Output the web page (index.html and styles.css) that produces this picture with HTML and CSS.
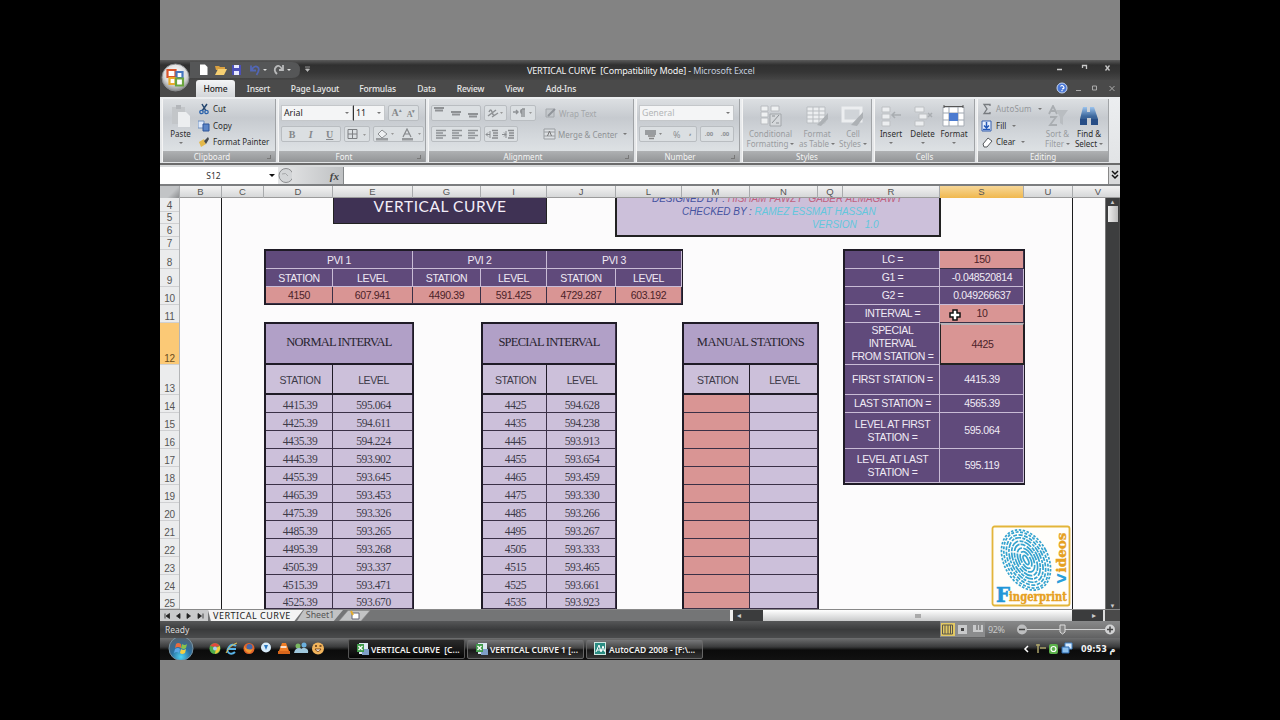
FILE: index.html
```html
<!DOCTYPE html>
<html lang="en">
<head>
<meta charset="utf-8">
<title>VERTICAL CURVE - Microsoft Excel</title>
<link rel="stylesheet" href="styles.css">
</head>
<body>
<svg class="defs" width="0" height="0">
  <defs>
    <linearGradient id="gBlue" x1="0" y1="0" x2="0" y2="1"><stop offset="0" stop-color="#9cc4ee"/><stop offset=".5" stop-color="#3f6a9f"/><stop offset="1" stop-color="#1f4478"/></linearGradient>
    <radialGradient id="gOrb" cx=".5" cy=".35" r=".7"><stop offset="0" stop-color="#fff"/><stop offset=".6" stop-color="#d9dadb"/><stop offset="1" stop-color="#77797b"/></radialGradient>
    <radialGradient id="gStart" cx=".5" cy=".85" r=".8"><stop offset="0" stop-color="#4fd4f5"/><stop offset=".5" stop-color="#2a6fa0"/><stop offset="1" stop-color="#56636f"/></radialGradient>
    <g id="lines"><path d="M1 1.5h10M1 4h7M1 6.5h10M1 9h7" stroke="#8f9396" stroke-width="1.3" fill="none"/></g>
    <g id="xls"><path d="M3 1h9v11H3z" fill="#dce8f2"/><path d="M6 7h7v6H6z" fill="#7fa0c8"/><path d="M1 2h7v8H1z" fill="#3f9a4a"/><path d="M2.5 4l4 4M6.500 4l-4 4" stroke="#fff" stroke-width="1.3"/></g>
  </defs>
</svg>
<div class="frame">
<main class="window">
  <header class="titlebar">
    <svg class="qat" width="160" height="20" viewBox="0 0 160 20">
      <path d="M30 2h102q8 0 8 8t-8 8H30z" fill="#555657"/>
      <path d="M40 4.500h5l2.500 2.500v8H40z" fill="#fff"/>
      <path d="M55 6h4l1 1h5v3h-9z" fill="#d9a040"/><path d="M55 15l3-6h9l-3 6z" fill="#f5cf72"/>
      <path d="M72 5h9v10h-9z" fill="#4c50b8"/><path d="M74 5h5v3h-5zM74 11h5v4h-5z" fill="#e8eaff"/>
      <path d="M91 5.500v5h5M91.500 10q3-5 6-3t-1 8" stroke="#5266b4" stroke-width="1.800" fill="none"/>
      <path d="M123 5v5h-4M122 9q-3-5-6-2t1 7" stroke="#b9babb" stroke-width="1.800" fill="none"/>
      <path d="M103 9h4l-2 2zM127 9h4l-2 2z" fill="#ddd"/><path d="M145 7h5M145.500 9h4l-2 2.500z" stroke="#bbb" stroke-width=".7" fill="#bbb"/>
    </svg>
    <div class="title">VERTICAL CURVE&nbsp; [Compatibility Mode] - <span>Microsoft Excel</span></div>
    <svg class="winbtns" width="70" height="20" viewBox="0 0 70 20"><g stroke="#c8c8c8" fill="none"><path d="M8 9.500h5" stroke-width="1.500"/><path d="M33.500 8V5.500h4V9" stroke-width="1.300"/><path d="M56.500 5.500l4 5m0-5l-4 5" stroke-width="1.300"/></g></svg>
  </header>
  <nav class="tabs">
    <span class="tab t1 active">Home</span><span class="tab t2">Insert</span><span class="tab t3">Page Layout</span><span class="tab t4">Formulas</span><span class="tab t5">Data</span><span class="tab t6">Review</span><span class="tab t7">View</span><span class="tab t8">Add-Ins</span>
    <svg class="docbtns" width="62" height="17" viewBox="0 0 62 17"><circle cx="6" cy="8" r="5" fill="#4a78d8" stroke="#c6d6f2"/><path d="M4.500 6.500q1.500-2 3 0T6 9M6 10v1.300" stroke="#fff" stroke-width="1.200" fill="none"/><g stroke="#aaa" fill="none"><path d="M20 10.500h5M36.500 6h4v4h-4zM53.500 6l5 5m0-5l-5 5"/></g></svg>
  </nav>
  <svg class="orb" width="29" height="29" viewBox="0 0 29 29"><circle cx="14.500" cy="14.500" r="13.500" fill="url(#gOrb)" stroke="#8b8d8f"/><g fill="#fff" stroke-width="2.200"><path d="M6.500 7h8v7h-8z" stroke="#d9542b"/><path d="M15.500 9h6v6h-6z" stroke="#4476c0"/><path d="M8.500 15h6v6h-6z" stroke="#e8ab2c"/><path d="M15 15.500h7v7h-7z" stroke="#6aa53f"/></g></svg>

  <section class="ribbon">
    <div class="group g-clip">
      <div class="body">
        <div class="big paste"><svg width="22" height="24" viewBox="0 0 22 24"><path d="M2 2h13v17H2z" fill="#c3c6c9"/><path d="M6 0h5v4H6z" fill="#b3b6ba"/><path d="M8 7h8l4 4v11H8z" fill="#eceef0"/></svg><b>Paste</b><i class="dd"></i></div>
        <div class="stack">
          <div><svg width="12" height="12" viewBox="0 0 12 12"><path d="M4 1l4 7M9 1L4 8" stroke="#24466f" stroke-width="1.500"/><circle cx="3.500" cy="9" r="1.700" fill="none" stroke="#2d64ac" stroke-width="1.300"/><circle cx="8.500" cy="9" r="1.700" fill="none" stroke="#2d64ac" stroke-width="1.300"/></svg><b>Cut</b></div>
          <div><svg width="12" height="12" viewBox="0 0 12 12"><path d="M0 1h6v7H0z" fill="#dfeafc" stroke="#6f8fbd"/><path d="M5 4h6v7H5z" fill="#5c85c6" stroke="#2d5499"/></svg><b>Copy</b></div>
          <div><svg width="12" height="12" viewBox="0 0 12 12"><path d="M1 6l5-3 2 5-5 3z" fill="#e3b84a"/><path d="M6 5l4-4 1 2-3 5z" fill="#45494d"/></svg><b class="fp">Format Painter</b></div>
        </div>
      </div>
      <div class="cap">Clipboard<i></i></div>
    </div>
    <div class="group g-font">
      <div class="body col">
        <div class="line"><span class="box w72">Arial<i class="dd"></i></span><span class="box w32">11<i class="dd"></i></span><span class="btn w31 gap3"><em class="serif">A<sup>▴</sup></em><em class="serif sm">A<sup>▾</sup></em></span></div>
        <div class="line"><span class="btn w60"><em class="serif">B</em><em class="serif it">I</em><em class="serif un">U</em></span><span class="btn w26 gap3"><svg width="22" height="11" viewBox="0 0 22 11"><path d="M2 .5h9v9H2zM6.500 0v10M2 5h9" stroke="#7c7f82" fill="none"/><path d="M17 5h3l-1.500 2z" fill="#999"/></svg></span><span class="btn w51 gap3"><svg width="48" height="13" viewBox="0 0 48 13"><path d="M3 6l4-4 5 4-5 4z" fill="#eef0f2" stroke="#8c8f92"/><path d="M1 10h12v2.500H1z" fill="#9a9da0"/><path d="M28 9l4-8 4 8M29.500 6h5" fill="none" stroke="#85888b" stroke-width="1.200"/><path d="M27 10h11v2.500H27z" fill="#96999c"/><path d="M16 5h3l-1.500 2zM43 5h3l-1.500 2z" fill="#999"/></svg></span></div>
      </div>
      <div class="cap">Font<i></i></div>
    </div>
    <div class="group g-align">
      <div class="body col">
        <div class="line"><span class="btn w50"><svg width="48" height="14" viewBox="0 0 48 14"><path d="M2 2h10M3 4.500h8M19 6h10M20 8.500h8M36 8h10M37 10.500h8" stroke="#8f9295" stroke-width="1.800"/></svg></span><span class="btn w23 gap3"><svg width="20" height="12" viewBox="0 0 20 12"><path d="M2 9l8-6M3 5q2-4 3 0t3 3M6 10l6-4" stroke="#8f9295" stroke-width="1.500" fill="none"/><path d="M14 5h3l-1.500 2z" fill="#999"/></svg></span><span class="btn w26 gap3"><svg width="24" height="12" viewBox="0 0 24 12"><path d="M2 5h5M5 3l2 2-2 2M11 2v8M13 2v8M11 2h3" stroke="#8f9295" stroke-width="1.400" fill="none"/><path d="M9 4q0-2 2-2v5q-2 0-2-3z" fill="#8f9295"/><path d="M18 5h3l-1.500 2z" fill="#999"/></svg></span><span class="txt"><svg width="13" height="12" viewBox="0 0 13 12"><path d="M2 2h8v8H2z" fill="#c4c8cc" stroke="#a4a8ac"/><path d="M4 9l7-7" stroke="#90949a" stroke-width="2"/></svg>Wrap Text</span></div>
        <div class="line"><span class="btn w50"><svg width="11" height="11"><use href="#lines"/></svg><svg width="11" height="11"><use href="#lines"/></svg><svg width="11" height="11"><use href="#lines"/></svg></span><span class="btn w34 gap3"><svg width="32" height="11" viewBox="0 0 32 11"><path d="M7 1.500h6M8 4h5M8 6.500h5M7 9h6M23 1.500h6M24 4h5M24 6.500h5M23 9h6" stroke="#8a8d90" stroke-width="1.300"/><path d="M5 2v7M1 5.500h4M3 3.500l-2 2 2 2M21 2v7M17 5.500h4M19 3.500l2 2-2 2" stroke="#8a8d90" fill="none"/></svg></span><span class="txt mc"><svg width="13" height="12" viewBox="0 0 13 12"><path d="M1 1h11v10H1zM1 4h11M1 8h11" fill="#dde0e3" stroke="#999da1"/><path d="M4.500 8L6.500 3l2 5" stroke="#777" fill="none"/></svg>Merge &amp; Center<i class="dd"></i></span></div>
      </div>
      <div class="cap">Alignment<i></i></div>
    </div>
    <div class="group g-num">
      <div class="body col">
        <div class="line"><span class="box w95 dis">General<i class="dd"></i></span></div>
        <div class="line"><span class="btn w58"><svg width="20" height="12" viewBox="0 0 20 12"><path d="M1 2h11v5H1z" fill="#999c9f"/><path d="M4 8h7M5 10.500h5" stroke="#888" stroke-width="1.500"/><path d="M15 5h3l-1.500 2z" fill="#888"/></svg><em>%</em><em class="comma">,</em></span><span class="btn w34 gap3"><em class="dec">.00</em><em class="dec">.00</em></span></div>
      </div>
      <div class="cap">Number<i></i></div>
    </div>
    <div class="group g-styles">
      <div class="body">
        <div class="big w56 dis"><svg width="26" height="24" viewBox="0 0 26 24"><path d="M3 1h7v5H3zM3 7h7v5H3zM3 13h7v6H3zM13 1h8v5h-8z" fill="#eff1f2" stroke="#b9bcc0"/><path d="M12 9h11v12H12z" fill="#d5d8db" stroke="#a2a6aa"/><path d="M14 18l7-8M14 11h3M18 18h3" stroke="#8d9195"/></svg><b>Conditional</b><b>Formatting<i class="dd"></i></b></div>
        <div class="big w38 dis"><svg width="24" height="24" viewBox="0 0 24 24"><path d="M2 2h18v16H2zM2 6h18M2 10h18M2 14h18M8 2v16M14 2v16" fill="#eceef0" stroke="#b9bdc1"/><path d="M12 20L23 8v6l-7 7z" fill="#adb1b5"/></svg><b>Format</b><b>as Table<i class="dd"></i></b></div>
        <div class="big w34 dis"><svg width="24" height="24" viewBox="0 0 24 24"><path d="M2 3h18v13H2z" fill="#d0d4d8" stroke="#eceef0" stroke-width="3"/><path d="M10 20L22 7v6l-6 8z" fill="#adb1b5"/></svg><b>Cell</b><b>Styles<i class="dd"></i></b></div>
      </div>
      <div class="cap">Styles</div>
    </div>
    <div class="group g-cells">
      <div class="body">
        <div class="big w33"><svg width="24" height="24" viewBox="0 0 24 24"><path d="M3 2h8v5H3zM3 9h8v5H3zM3 16h8v5H3z" fill="#eceef0" stroke="#bdc0c3"/><path d="M22 10h-9M16 7l-3 3 3 3" stroke="#a9adb1" fill="none" stroke-width="1.500"/></svg><b>Insert</b><i class="dd"></i></div>
        <div class="big w31"><svg width="24" height="24" viewBox="0 0 24 24"><path d="M4 2h9v5H4zM8 9h8v5H8zM4 16h9v5H4z" fill="#eceef0" stroke="#bdc0c3"/><path d="M17 8l4 4m0-4l-4 4" stroke="#a9adb1" stroke-width="1.500"/></svg><b>Delete</b><i class="dd"></i></div>
        <div class="big w33"><svg width="24" height="24" viewBox="0 0 24 24"><path d="M1 2h21v19H1z" fill="#fff" stroke="#a7adb5"/><path d="M1 8h21M1 15h21M7 2v19M16 2v19" stroke="#9da5af"/><path d="M7 8h9v8H7z" fill="#4c7bd0"/><path d="M2 0v3M21 0v3M2 1.500h19" stroke="#555"/></svg><b>Format</b><i class="dd"></i></div>
      </div>
      <div class="cap">Cells</div>
    </div>
    <div class="group g-edit">
      <div class="body">
        <div class="stack">
          <div class="dis"><svg width="12" height="12" viewBox="0 0 12 12"><path d="M9 3V1.500H3L6 6l-3 4.500h6V9" stroke="#777b7f" stroke-width="1.300" fill="none"/></svg><b class="as">AutoSum</b><i class="dd"></i></div>
          <div><svg width="12" height="12" viewBox="0 0 12 12"><path d="M1 1h9v10H1z" fill="#e8f0fd" stroke="#355fae"/><path d="M5.500 2v5M3 5.500L5.500 8 8 5.500M2 9.500h7" stroke="#2458b8" stroke-width="1.500" fill="none"/></svg><b>Fill</b><i class="dd"></i></div>
          <div><svg width="12" height="12" viewBox="0 0 12 12"><path d="M2 8l5-6 4 3-5 6H3z" fill="#fff" stroke="#54585c"/></svg><b>Clear</b><i class="dd"></i></div>
        </div>
        <div class="big w31 dis"><svg width="24" height="24" viewBox="0 0 24 24"><path d="M3 9l4-8 4 8M5 6h4M4 12h6l-6 8h7" stroke="#a9adb1" stroke-width="1.800" fill="none"/><path d="M10 5h12l-5 7v8l-3-2v-6z" fill="#b9bdc1"/></svg><b>Sort &amp;</b><b>Filter<i class="dd"></i></b></div>
        <div class="big w32"><svg width="24" height="24" viewBox="0 0 24 24"><path d="M6 2h4v5h3V2h4l4 12v6h-7v-7h-4v7H3v-6z" fill="url(#gBlue)"/><path d="M3 14h7v6H3zM14 14h7v6h-7z" fill="#274d86"/></svg><b>Find &amp;</b><b>Select<i class="dd"></i></b></div>
      </div>
      <div class="cap">Editing</div>
    </div>
  </section>

  <section class="formula">
    <span class="name">S12</span><i class="dd big-dd"></i>
    <span class="fx"><svg width="14" height="15" viewBox="0 0 14 15"><circle cx="8" cy="7.500" r="7" fill="#d3d5d7" stroke="#8b8d8f"/><path d="M4 6q4-2 6 2" stroke="#a6a8aa" fill="none"/></svg><b>fx</b></span>
    <span class="input"></span><span class="expand"><svg width="12" height="16" viewBox="0 0 12 16"><path d="M3 4l3 3 3-3M3 8l3 3 3-3" stroke="#111" stroke-width="1.500" fill="none"/></svg></span>
  </section>

  <section class="grid">
    <div class="colhead"><span class="corner"></span><span>B</span><span>C</span><span>D</span><span>E</span><span>G</span><span>I</span><span>J</span><span>L</span><span>M</span><span>N</span><span>Q</span><span>R</span><span class="on">S</span><span>U</span><span class="v">V</span></div>
    <div class="rowhead"><span>4</span><span>5</span><span>6</span><span>7</span><span>8</span><span>9</span><span>10</span><span>11</span><span class="on">12</span><span>13</span><span>14</span><span>15</span><span>16</span><span>17</span><span>18</span><span>19</span><span>20</span><span>21</span><span>22</span><span>23</span><span>24</span><span class="last">25</span></div>
    <div class="sheet">
      <div class="margin"></div>
      <div class="heading">VERTICAL CURVE</div>
      <div class="credits"><p class="c1"><span class="navy">DESIGNED BY :</span> HISHAM FAWZY&nbsp; GABER ALMAGAWY</p><p class="c2"><span class="navy">CHECKED BY :</span> RAMEZ ESSMAT HASSAN</p><p class="c3">VERSION&nbsp;&nbsp; 1.0</p></div>
      <div class="tbl pvi">
        <span class="h two">PVI 1</span><span class="h two">PVI 2</span><span class="h two">PVI 3</span>
        <span class="h">STATION</span><span class="h">LEVEL</span><span class="h">STATION</span><span class="h">LEVEL</span><span class="h">STATION</span><span class="h">LEVEL</span>
        <span class="r">4150</span><span class="r">607.941</span><span class="r">4490.39</span><span class="r">591.425</span><span class="r">4729.287</span><span class="r">603.192</span>
      </div>
      <div class="tbl data normal">
        <span class="cap2">NORMAL INTERVAL</span><span class="h">STATION</span><span class="h">LEVEL</span>
        <span>4415.39</span><span>595.064</span><span>4425.39</span><span>594.611</span><span>4435.39</span><span>594.224</span><span>4445.39</span><span>593.902</span><span>4455.39</span><span>593.645</span><span>4465.39</span><span>593.453</span><span>4475.39</span><span>593.326</span><span>4485.39</span><span>593.265</span><span>4495.39</span><span>593.268</span><span>4505.39</span><span>593.337</span><span>4515.39</span><span>593.471</span><span>4525.39</span><span>593.670</span>
      </div>
      <div class="tbl data special">
        <span class="cap2">SPECIAL INTERVAL</span><span class="h">STATION</span><span class="h">LEVEL</span>
        <span>4425</span><span>594.628</span><span>4435</span><span>594.238</span><span>4445</span><span>593.913</span><span>4455</span><span>593.654</span><span>4465</span><span>593.459</span><span>4475</span><span>593.330</span><span>4485</span><span>593.266</span><span>4495</span><span>593.267</span><span>4505</span><span>593.333</span><span>4515</span><span>593.465</span><span>4525</span><span>593.661</span><span>4535</span><span>593.923</span>
      </div>
      <div class="tbl data manual">
        <span class="cap2">MANUAL STATIONS</span><span class="h">STATION</span><span class="h">LEVEL</span>
        <span class="r"></span><span></span><span class="r"></span><span></span><span class="r"></span><span></span><span class="r"></span><span></span><span class="r"></span><span></span><span class="r"></span><span></span><span class="r"></span><span></span><span class="r"></span><span></span><span class="r"></span><span></span><span class="r"></span><span></span><span class="r"></span><span></span><span class="r"></span><span></span>
      </div>
      <div class="tbl params">
        <span class="h">LC =</span><span class="r">150</span>
        <span class="h">G1 =</span><span class="h n">-0.048520814</span>
        <span class="h">G2 =</span><span class="h n">0.049266637</span>
        <span class="h">INTERVAL =</span><span class="r">10</span>
        <span class="h">SPECIAL<br>INTERVAL<br>FROM STATION =</span><span class="r sel">4425</span>
        <span class="h">FIRST STATION =</span><span class="h n">4415.39</span>
        <span class="h">LAST STATION =</span><span class="h n">4565.39</span>
        <span class="h s2">LEVEL AT FIRST<br>STATION =</span><span class="h n s2">595.064</span>
        <span class="h s2">LEVEL AT LAST<br>STATION =</span><span class="h n s2">595.119</span>
      </div>
      <svg class="logo" width="80" height="83" viewBox="0 0 80 83">
        <rect x="1.500" y="1.500" width="77" height="79" rx="2" fill="#fffefb" stroke="#e3b53a" stroke-width="1.800"/>
        <g transform="rotate(-28 35 35)" fill="none" stroke="#35a3cf" stroke-width="1.700">
          <ellipse cx="35" cy="35" rx="2" ry="5"/><ellipse cx="35" cy="35" rx="4.500" ry="9" stroke-dasharray="9 1.500"/><ellipse cx="35" cy="35" rx="7" ry="13" stroke-dasharray="7 1.500 12 1"/><ellipse cx="35" cy="35" rx="9.500" ry="17" stroke-dasharray="5 1.500 9 1"/><ellipse cx="35" cy="35" rx="12" ry="20.500" stroke-dasharray="8 1.300 4 1"/><ellipse cx="35" cy="35" rx="14.500" ry="24" stroke-dasharray="6 1.500 3 1"/><ellipse cx="35" cy="35" rx="17" ry="27" stroke-dasharray="4 1.500"/><ellipse cx="35" cy="35" rx="19.500" ry="30" stroke-dasharray="3 1.500"/><ellipse cx="35" cy="35" rx="22" ry="32" stroke-dasharray="2.500 1.500"/>
        </g>
        <text x="5" y="77" class="lf" textLength="14" lengthAdjust="spacingAndGlyphs">F</text>
        <text x="18" y="76" class="lt" textLength="58" lengthAdjust="spacingAndGlyphs">ingerprint</text>
        <g transform="translate(74.500 58.500) rotate(-90)"><text x="0" y="0" class="lv" textLength="10" lengthAdjust="spacingAndGlyphs">V</text><text x="11" y="0" class="lt" textLength="40" lengthAdjust="spacingAndGlyphs">ideos</text></g>
      </svg>
      <svg class="cursor" width="12" height="12" viewBox="0 0 12 12"><path d="M4 1h4v3h3v4H8v3H4V8H1V4h3z" fill="#fff" stroke="#111" stroke-width="1.500"/></svg>
    </div>
    <div class="vscroll"><i class="up">▲</i><i class="thumb"></i><i class="down">▼</i></div>
  </section>

  <section class="sheettabs">
    <svg class="nav" width="48" height="12" viewBox="0 0 48 12"><path d="M0 0h48v12H0z" fill="#c9cacb"/><path d="M5 3.500v5M9.500 3.500v5L6 6zM20 3.500v5L16.500 6zM27 3.500v5L30.500 6zM38 3.500v5L41.500 6zM43 3.500v5" fill="#222" stroke="#222" stroke-width=".8"/></svg>
    <span class="st cur">VERTICAL CURVE</span><span class="st s1">Sheet1</span>
    <svg class="newtab" width="32" height="12" viewBox="0 0 32 12"><path d="M0 11L9 .5h22L22 11z" fill="#c2c3c4" stroke="#8a8a8a" stroke-width=".6"/><path d="M13 3h7v6h-7z" fill="#fff" stroke="#667"/><path d="M12 1l2 4" stroke="#e6ad2c" stroke-width="2"/></svg>
    <span class="fill"></span><span class="split"></span><span class="hl">◂</span><span class="htrack"><i></i></span><span class="hr">▸</span><span class="end"></span>
  </section>

  <footer class="status"><span class="ready">Ready</span>
    <svg width="180" height="17" viewBox="0 0 180 17"><path d="M-1 1h46v15H-1z" fill="#8b8c8d"/><path d="M1 2h14v13H1z" fill="#e3c964"/><path d="M2.500 4h10v9h-10zM5 4v9M8 4v9M10.500 4v9" stroke="#5b574b" fill="none"/><path d="M18 4h9v9h-9zM33 4h10v7H33z" fill="#c9cacb"/><path d="M21 7h3v3h-3z" fill="#444"/><path d="M37 4v5M40 4v5" stroke="#555"/><path d="M84 8.500h88" stroke="#d0d1d2"/><circle cx="82" cy="8.500" r="5" fill="#bdbebf"/><path d="M79 8.500h6" stroke="#444" stroke-width="1.500"/><circle cx="170" cy="8.500" r="5" fill="#d2d3d4"/><path d="M167 8.500h6M170 5.500v6" stroke="#444" stroke-width="1.500"/><path d="M120 4h5v7l-2.500 2-2.500-2z" fill="#888" stroke="#ddd"/><text x="48" y="12" class="zoomtxt" textLength="17">92%</text></svg>
  </footer>

  <footer class="taskbar">
    <svg class="quick" width="188" height="22" viewBox="0 0 188 22">
      <circle cx="21" cy="10.500" r="12" fill="url(#gStart)" stroke="#7794a5"/><path d="M16 6q2-2 5 0v4q-3-2-6 0z" fill="#e96b3c"/><path d="M22 6q3 2 5 0l-1 4q-2 2-5 0z" fill="#8ac34c"/><path d="M15 11q3-2 5 0l-1 4q-2-2-5 0z" fill="#5aa7e8"/><path d="M21 11q2 2 5 0l-1 4q-3 2-5 0z" fill="#f5cf42"/>
      <circle cx="55" cy="10.500" r="5.500" fill="#4fae4b"/><path d="M50 8q5-6 10 0l-5 1z" fill="#e2483d"/><path d="M60 8q1 6-5 8l1-6z" fill="#f3cd3b"/><circle cx="55" cy="10.500" r="2" fill="#a9ccf5"/>
      <path d="M76 8q-4-3-7 1t0 6q3 2 6-1M68 11h8" stroke="#58b4e8" stroke-width="2" fill="none"/><path d="M66 15q4-8 11-10" stroke="#e8c34b" fill="none"/>
      <circle cx="89" cy="10.500" r="5.500" fill="#e2642a"/><circle cx="89.500" cy="9" r="3" fill="#4567a8"/><path d="M84 8q3 5 9 3l-3 4q-5 0-6-7z" fill="#f09b34"/>
      <circle cx="106" cy="9.500" r="5" fill="#d9ecfa"/><path d="M104 7h4l-2 5z" fill="#2a78c2"/>
      <path d="M122 5h4l3 8h-10z" fill="#ef7d25"/><path d="M120.500 9h6" stroke="#fff" stroke-width="1.500"/><path d="M118 13h12v3h-12z" fill="#d9661b"/>
      <circle cx="138" cy="8" r="2.500" fill="#7ab861"/><circle cx="144" cy="7" r="2.500" fill="#6bb0df"/><path d="M134 15q1-5 5-5t4 5zM140 15q1-6 5-5t3 5z" fill="#9fc7dc"/>
      <circle cx="158" cy="10.500" r="6" fill="#f2b45c"/><path d="M155 11q3 5 6 0z" fill="#fff" stroke="#7d4a1b"/><path d="M155 8h2M159.500 8h2" stroke="#5a3514" stroke-width="1.300"/>
    </svg>
    <span class="task on"><svg width="13" height="14"><use href="#xls"/></svg>VERTICAL CURVE&nbsp; [C...</span>
    <span class="task b"><svg width="13" height="14"><use href="#xls"/></svg>VERTICAL CURVE 1 [...</span>
    <span class="task c"><svg width="13" height="14" viewBox="0 0 13 14"><path d="M0 0h12v13H0z" fill="#cfe8e2"/><path d="M1 1h10v11H1z" fill="#2b8d83"/><path d="M2 10l3-7 2 7M7 10l2-6 2 6M3 8h7" stroke="#fff" fill="none"/></svg>AutoCAD 2008 - [F:\...</span>
    <svg class="tray" width="56" height="22" viewBox="0 0 56 22"><path d="M5 8l-3 3 3 3" stroke="#fff" stroke-width="1.500" fill="none"/><path d="M15 6v9M13 7h4M17 10h6" stroke="#aaa26a" stroke-width="1.500"/><rect x="26" y="6" width="9" height="10" rx="2" fill="#5bb04a"/><circle cx="30.500" cy="11" r="2.500" fill="none" stroke="#fff" stroke-width="1.200"/><path d="M42 5h7v6h-7z" fill="#d8ecff" stroke="#4585c8"/><path d="M39 9h7v6h-7z" fill="#8cc0ee" stroke="#2d6bb0"/></svg>
    <span class="clock">09:53 م</span>
  </footer>
</main>
</div>
</body>
</html>
```
FILE: styles.css
```css
* { box-sizing: border-box; }
body { margin: 0; background: #000; font-family: "Noto Sans", sans-serif; }
b, i, em { font-weight: inherit; font-style: normal; }
.defs { position: absolute; }
svg { display: block; flex: none; }
.frame { width: 960px; height: 720px; margin: 0 auto; padding: 60px 0; background: #838383; overflow: hidden; }
.window { position: relative; display: flex; flex-direction: column; width: 960px; height: 600px; background: #4a4a4a; overflow: hidden; }

.titlebar { display: flex; height: 20px; background: linear-gradient(#5a5a5a, #303030 25%, #353535 60%, #464646); }
.title { flex: 1; padding: 3px 0 0 207px; font-size: 9px; line-height: 15px; letter-spacing: -0.14px; color: #f4f4f4; white-space: nowrap; }
.title span { color: #c3cddd; }
.winbtns { margin-right: 1px; }

.tabs { display: flex; height: 17px; background: #4a4a4a; padding-left: 36px; }
.tab { height: 17px; font-size: 8.5px; line-height: 18px; text-align: center; color: #e8e8e8; white-space: nowrap; font-weight: 500; letter-spacing: -.15px; }
.tab.active { background: linear-gradient(#f4f5f6, #d3d6d9); color: #222; border-radius: 3px 3px 0 0; }
.t1 { width: 39px; } .t2 { width: 47px; } .t3 { width: 66px; } .t4 { width: 59px; } .t5 { width: 39px; } .t6 { width: 49px; } .t7 { width: 39px; } .t8 { width: 54px; }
.docbtns { margin: 0 2px 0 auto; }
.orb { position: absolute; left: 1px; top: 3px; }

.ribbon { display: flex; gap: 2px; height: 68px; padding: 2px 11px 3px 2px; background: linear-gradient(#eceef0, #e2e4e6 96%); border-bottom: 2px solid #6b6b6b; }
.group { display: flex; flex-direction: column; height: 63px; background: linear-gradient(#dcdfe2, #c6cacf 30%, #d4d8dc 60%, #e4e8ea); border-right: 1px solid #a0a3a6; border-left: 1px solid #f5f5f5; overflow: hidden; }
.g-clip { width: 114px; } .g-font { width: 148px; } .g-align { width: 206px; } .g-num { width: 104px; } .g-styles { width: 130px; } .g-cells { width: 101px; } .g-edit { flex: 1; }
.body { display: flex; height: 52px; padding-top: 2px; }
.cap { position: relative; height: 11px; font-size: 8px; line-height: 11px; text-align: center; color: #f4f4f4; background: linear-gradient(#afb1b3, #929496); padding-right: 14px; }
.g-font .cap, .g-num .cap, .g-align .cap { padding-right: 16px; }
.g-styles .cap, .g-cells .cap, .g-edit .cap { padding-right: 0; }
.cap i { position: absolute; right: 4px; top: 4px; width: 4px; height: 4px; border: solid #777; border-width: 0 1px 1px 0; }
.big { display: flex; flex-direction: column; align-items: center; padding-top: 4px; font-size: 8px; line-height: 10px; color: #2c2c2c; white-space: nowrap; }
.big b { display: flex; align-items: center; }
.big > .dd { margin-top: 3px; }
.big.dis { color: #999c9f; }
.dis { color: #94979a; }
.paste { width: 35px; }
.stack { display: flex; flex-direction: column; font-size: 8px; line-height: 16.5px; color: #2c2c2c; }
.stack div { display: flex; align-items: center; gap: 3px; height: 16.5px; white-space: nowrap; }
.stack div.dis { color: #94979a; }
.dd { display: inline-block; width: 0; height: 0; border: 2px solid transparent; border-top-color: #777; border-bottom: 0; margin-left: 3px; }
.big > .dd { margin-left: 0; }
.big b .dd { margin-left: 2px; }
.col { flex-direction: column; gap: 5px; padding: 6px 0 0 2px; }
.line { display: flex; height: 16px; align-items: center; }
.box { display: flex; justify-content: space-between; align-items: center; height: 16px; padding: 0 3px 0 2px; border: 1px solid #c4c7ca; background: #f4f5f6; font-size: 8.800px; color: #222; }
.box.dis { color: #b3b5b7; }
.w32.box { border-left-color: #333; }
.btn { display: flex; justify-content: space-around; align-items: center; height: 16px; border: 1px solid #b9bdc1; border-radius: 2px; background: #dbdfe2; font-size: 9px; color: #8d9093; }
.gap3 { margin-left: 3px; }
.w72 { width: 72px; } .w32 { width: 32px; } .w31 { width: 31px; } .w60 { width: 60px; } .w26 { width: 26px; } .w51 { width: 51px; } .w50 { width: 50px; } .w23 { width: 23px; } .w34 { width: 34px; } .w95 { width: 95px; } .w58 { width: 58px; } .w56 { width: 55px; } .w38 { width: 38px; } .w33 { width: 32px; }
.serif { font: bold 10px "Liberation Serif", serif; color: #85888b; }
.serif sup { font-size: 5px; } .sm { font-size: 8px; } .it { font-style: italic; } .un { text-decoration: underline; }
.dec { font-size: 6px; font-weight: bold; }
.comma { font-weight: bold; line-height: 8px; padding-bottom: 4px; }
.txt { display: flex; align-items: center; gap: 2px; margin-left: 8px; font-size: 8px; color: #a3a6a9; white-space: nowrap; }
.mc { margin-left: 25px; color: #8f9295; }
.g-edit .stack { width: 64px; padding-left: 3px; }
.as { letter-spacing: .15px; }

.formula { display: flex; height: 21px; border-top: 2px solid #d8dadb; border-bottom: 2px solid #7c7e80; background: #fff; align-items: stretch; }
.name { width: 107px; text-align: center; font-size: 8.5px; line-height: 17px; color: #333; background: #fff; }
.big-dd { align-self: center; border-width: 3px; border-bottom: 0; border-top-color: #111; margin-left: 2px; }
.fx { display: flex; align-items: center; justify-content: space-between; width: 66px; margin-left: 3px; padding: 0 4px 0 0; background: linear-gradient(90deg, #e6e7e8, #bfc1c3); border-right: 1px solid #85888a; font: italic bold 11px "Liberation Serif", serif; color: #444; }
.fx b { font-style: italic; }
.input { flex: 1; background: #fff; }
.expand { width: 12px; background: #d9dadb; border-left: 1px solid #888; }

.grid { --rows: 14px 12px 13px 13px 19px 18px 18px 18px 42px 30px repeat(11, 18px) 16px; display: grid; grid-template: 12px 411px / 20px 925px 15px; height: 423px; font-family: "Liberation Sans", sans-serif; }
.colhead { grid-column: 1 / 4; display: grid; grid-template-columns: 20px 42px 42px 69px 80px 68px 66px 69px 66px 68px 68px 25px 97px 84px 49px 47px; background: linear-gradient(#f3f3f3, #d6d7d8); border-bottom: 1px solid #9b9b9b; }
.colhead span { font-size: 9.500px; line-height: 12px; text-align: center; color: #555; border-right: 1px solid #a9abad; }
.colhead .corner { background: linear-gradient(135deg, #c2c4c6 60%, #8b8d8f); }
.colhead .on { background: linear-gradient(#f7d798, #f0b84e); }
.colhead .v { border: 0; padding-left: 3px; }
.rowhead { display: grid; grid-template-rows: var(--rows); background: #ebeced; border-right: 1px solid #b3b5b7; }
.rowhead span { display: flex; align-items: flex-end; justify-content: center; font-size: 10px; line-height: 11px; color: #555; letter-spacing: -.3px; border-bottom: 1px solid #cfd0d2; overflow: hidden; }
.rowhead .on { background: #fbc976; color: #6b4d1c; }
.rowhead .last { align-items: flex-start; padding-top: 5px; }
.sheet { position: relative; display: grid; grid-template-rows: var(--rows); grid-template-columns: 42px 42px 69px 80px 68px 66px 69px 66px 68px 68px 25px 97px 84px 49px 32px; background: #fcfbfc; overflow: hidden; }
.margin { grid-area: 1 / 2 / 23 / 15; border: solid #1c1c1e; border-width: 0 1px; margin-left: -1px; }
.heading { grid-area: 1 / 4 / 3 / 7; background: #3f3254; border: 1px solid #222; border-top: 0; color: #f3eef8; font: 15.5px/16px Lato, sans-serif; text-align: center; letter-spacing: .55px; }
.credits { grid-area: 1 / 8 / 4 / 13; background: #ccc0da; border: solid #222; border-width: 0 2px 2px; margin-right: -1px; margin-left: -1px; font: italic 10px/13px "Liberation Sans", sans-serif; letter-spacing: -.05px; color: #62c7dd; overflow: hidden; }
.credits p { margin: 0; white-space: nowrap; }
.credits .c1 { margin-top: -6px; padding-left: 35px; color: #c0627f; }
.c2 { padding-left: 65px; }
.c3 { padding-left: 195px; }
.navy { color: #4553a0; }
.tbl { display: grid; grid-template-columns: subgrid; grid-template-rows: subgrid; border: solid #1f1b26; border-width: 2px 0 0 2px; margin: -1px -1px 0 0; }
.tbl span { display: flex; align-items: center; justify-content: center; text-align: center; border: solid #3a3046; border-width: 0 1px 1px 0; }
.tbl span.r { background: #d99594; }
.pvi { grid-area: 5 / 3 / 8 / 9; border-right-width: 1px; border-bottom-width: 1px; font-size: 10.5px; letter-spacing: -.35px; color: #4b2229; }
.pvi .two { grid-column: span 2; }
.pvi .h, .params .h { background: #604a7b; color: #f0eaf5; border-color: #c9bcd6; }
.data { font: 11.5px "Liberation Serif", serif; letter-spacing: -.4px; color: #3d3a48; background: #ccc0da; border-right-width: 1px; }
.data span { padding: 2px 0 0 2px; }
.data .h { font: 10.5px "Liberation Sans", sans-serif; padding: 2px 0 0 2px; border-color: #1f1b26; border-bottom-width: 2px; }
.data .cap2 { grid-column: span 2; background: #b1a0c7; font-size: 12.5px; letter-spacing: -.75px; color: #28242f; padding: 0 0 3px; border-bottom: 2px solid #1f1b26; }
.normal { grid-area: 9 / 3 / 23 / 5; }
.special { grid-area: 9 / 6 / 23 / 8; }
.manual { grid-area: 9 / 9 / 23 / 11; }
.manual .cap2 { letter-spacing: -.55px; }
.params { grid-area: 5 / 12 / 16 / 14; border-right-width: 1px; border-bottom-width: 2px; font-size: 10.500px; line-height: 12.700px; letter-spacing: -.35px; color: #4b2229; }
.params span { padding-left: 1px; }
.params .s2 { grid-row: span 2; }
.params .sel { border: 1px solid #222; border-top: 2px solid #b8b3b8; border-bottom-width: 2px; }
.logo { position: absolute; left: 811px; top: 327px; }
.lf { font: bold 21px "DejaVu Serif", serif; fill: #2196d8; stroke: #2196d8; stroke-width: .6px; }
.lt { font: bold 13px "DejaVu Serif", serif; fill: #e6a021; stroke: #e6a021; stroke-width: .4px; }
.lv { font: bold 13px "DejaVu Sans", sans-serif; fill: #2aa0da; }
.cursor { position: absolute; left: 769px; top: 111px; }
.vscroll { display: flex; flex-direction: column; align-items: center; background: #3d3e3f; border-left: 1px solid #777; margin-right: 1px; font-size: 6px; color: #ccc; }
.up { margin-top: 1px; } .thumb { width: 10px; height: 16px; background: linear-gradient(90deg, #eee, #bbb); margin-top: 1px; } .down { margin-top: auto; }

.sheettabs { display: flex; height: 12px; background: #747576; border-top: 1px solid #888; }
.st { font-size: 8.800px; line-height: 11px; white-space: nowrap; }
.cur { width: 95px; padding-left: 5px; letter-spacing: .5px; font-size: 9px; background: #f4f4f4; color: #222; clip-path: polygon(0 0, 100% 0, 91% 100%, 3% 100%); }
.s1 { width: 46px; margin-left: -6px; text-align: center; background: #c2c3c4; color: #555; clip-path: polygon(15% 0, 100% 0, 80% 100%, 0 100%); }
.newtab { margin-left: -4px; }
.fill { flex: 1; }
.split { width: 3px; background: #eee; }
.hl, .hr { width: 30px; background: #3b3c3d; color: #ccc; font-size: 8px; line-height: 10px; padding-left: 4px; }
.htrack { display: flex; justify-content: center; width: 309px; background: linear-gradient(#fff, #c9cacb); }
.htrack i { align-self: center; width: 6px; height: 4px; background: #aaa; }
.hr { width: 31px; padding-left: 20px; }
.end { width: 17px; background: linear-gradient(90deg, #ddd 2px, #4a4a4a 2px); }

.status { display: flex; justify-content: space-between; height: 18px; background: linear-gradient(#565758, #3a3b3c 50%, #4b4c4d); color: #ddd; font-size: 8.500px; line-height: 17px; padding-left: 5px; }
.zoomtxt { font-size: 9px; fill: #c8c8c8; }
.status svg { background: linear-gradient(#88898a, #777 50%, #606162); }
.taskbar { display: flex; align-items: center; height: 22px; background: linear-gradient(#6e6f70, #3a3b3c 40%, #0b0b0b 55%, #111); color: #f2f2f2; }
.task { display: flex; align-items: center; gap: 2px; width: 117px; height: 20px; padding-left: 7px; margin-right: 2px; border: 1px solid #666; border-radius: 2px; background: linear-gradient(#77787a, #444 45%, #181818 55%, #333); font-size: 8.500px; white-space: nowrap; font-weight: 600; }
.task.on { background: linear-gradient(#2b2b2b, #050505); border-color: #555; }
.tray { margin-left: auto; }
.clock { width: 41px; padding-left: 2px; font: bold 9px "DejaVu Sans Condensed", "DejaVu Sans", sans-serif; white-space: nowrap; letter-spacing: -.9px; }
```
